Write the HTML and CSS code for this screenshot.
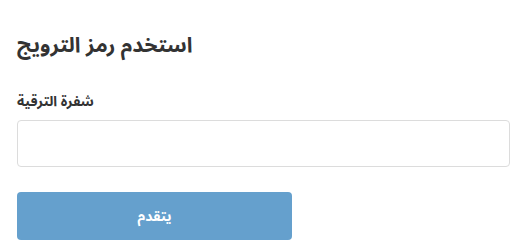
FILE: index.html
```html
<!DOCTYPE html>
<html>
<head>
<meta charset="utf-8">
<link rel="stylesheet" href="styles.css">
</head>
<body>
<div class="page">
  <h1 class="title">استخدم رمز الترويج</h1>
  <form class="form">
    <label class="label">شفرة الترقية</label>
    <input class="input" type="text">
    <button class="btn" type="button">يتقدم</button>
  </form>
</div>
</body>
</html>
```
FILE: styles.css
```css
html, body {
  margin: 0;
  padding: 0;
  background: #fff;
}
.page {
  padding: 30px 6px 0 17px;
  font-family: "Noto Sans Arabic", "Noto Naskh Arabic", "Liberation Sans", "DejaVu Sans", sans-serif;
  color: #333;
}
.title {
  margin: 0;
  font-size: 21px;
  font-weight: bold;
  line-height: 30px;
  height: 30px;
}
.form {
  display: flex;
  flex-direction: column;
  align-items: flex-start;
  margin-top: 32px;
}
.label {
  font-size: 14px;
  font-weight: bold;
  line-height: 20px;
}
.input {
  margin-top: 8px;
  box-sizing: border-box;
  width: 493px;
  height: 47px;
  border: 1px solid #dcdcdc;
  border-radius: 4px;
  background: #fff;
}
.btn {
  margin-top: 25px;
  box-sizing: border-box;
  width: 275px;
  height: 48px;
  border: none;
  border-radius: 4px;
  background: #65a0cd;
  color: #fff;
  font-family: "Noto Sans Arabic", "Noto Naskh Arabic", "Liberation Sans", "DejaVu Sans", sans-serif;
  font-size: 14px;
  font-weight: bold;
}
```
